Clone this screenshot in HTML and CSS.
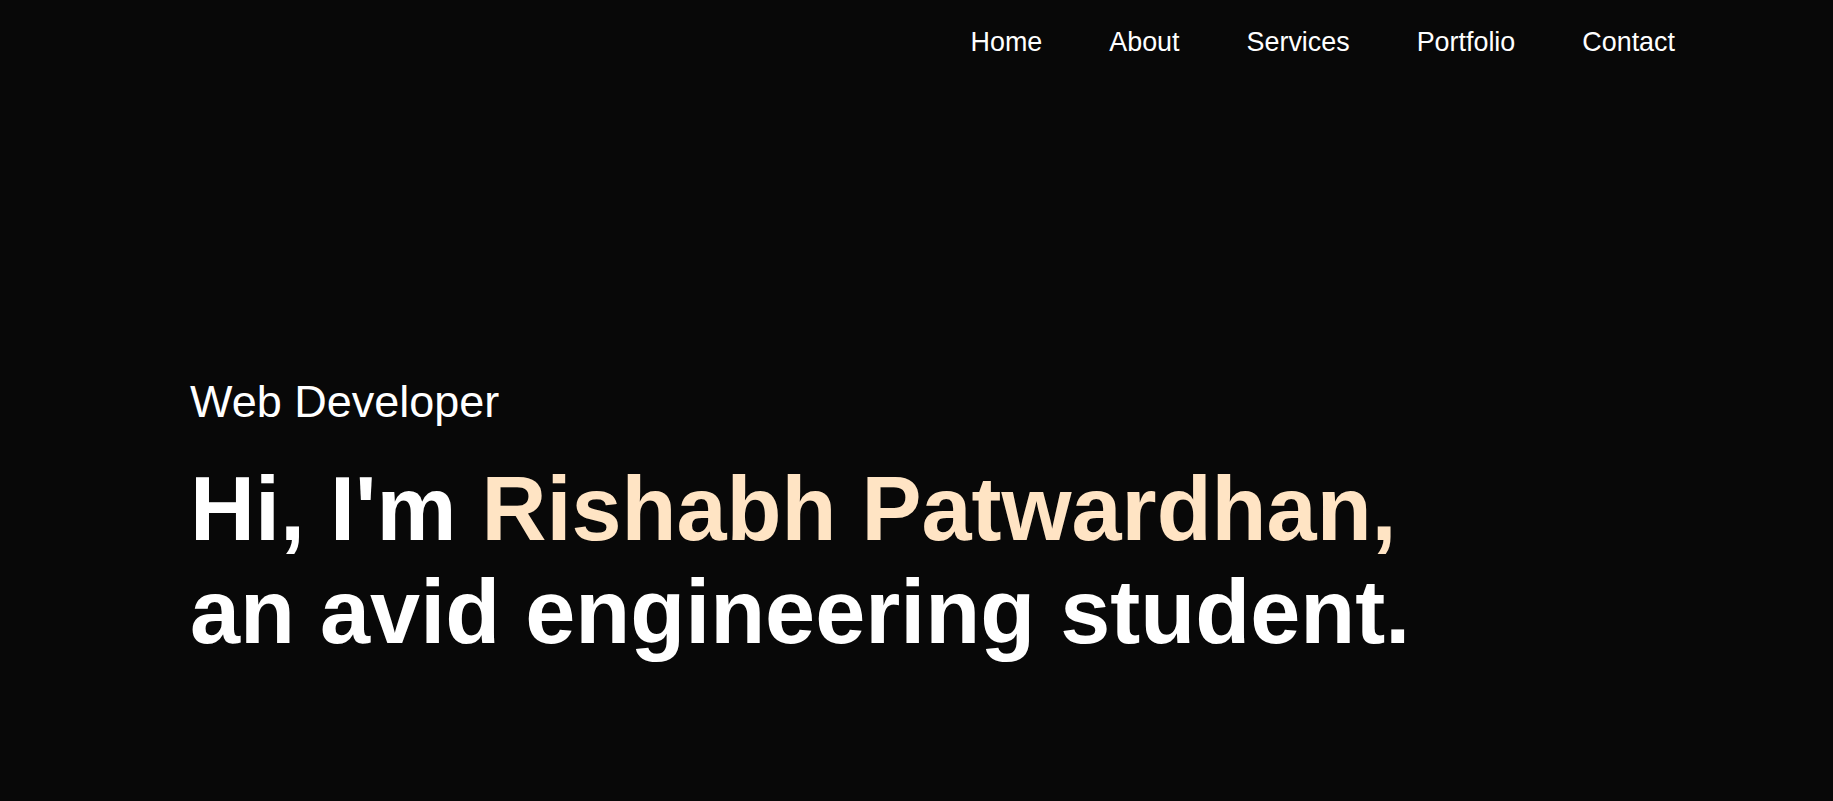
FILE: index.html
```html
<!DOCTYPE html>
<html lang="en">
<head>
<meta charset="utf-8">
<title>Rishabh Patwardhan</title>
<link rel="stylesheet" href="styles.css">
</head>
<body>
<header class="header">
  <nav class="nav">
    <a class="nav-link" href="#">Home</a>
    <a class="nav-link" href="#">About</a>
    <a class="nav-link" href="#">Services</a>
    <a class="nav-link" href="#">Portfolio</a>
    <a class="nav-link" href="#">Contact</a>
  </nav>
</header>
<section class="hero">
  <p class="role">Web Developer</p>
  <h1 class="title">Hi, I'm <span class="name">Rishabh Patwardhan,</span><br>an avid engineering student.</h1>
</section>
</body>
</html>
```

FILE: styles.css
```css
* { box-sizing: border-box; }
html, body {
  margin: 0;
  padding: 0;
  background: #080808;
  color: #ffffff;
  font-family: "Liberation Sans", Arial, sans-serif;
  height: 100%;
  overflow: hidden;
}
.header {
  display: flex;
  justify-content: flex-end;
  padding: 27px 158px 0 0;
}
.nav {
  display: flex;
  gap: 67px;
}
.nav-link {
  color: #ffffff;
  text-decoration: none;
  font-size: 26.9px;
  line-height: normal;
}
.hero {
  padding: 318px 0 0 190px;
}
.role {
  margin: 0;
  font-size: 45px;
  line-height: normal;
  font-weight: 400;
}
.title {
  margin: 30px 0 0 0;
  font-size: 90px;
  font-weight: 700;
  line-height: normal;
}
.name {
  color: #ffe4c4;
}
```
